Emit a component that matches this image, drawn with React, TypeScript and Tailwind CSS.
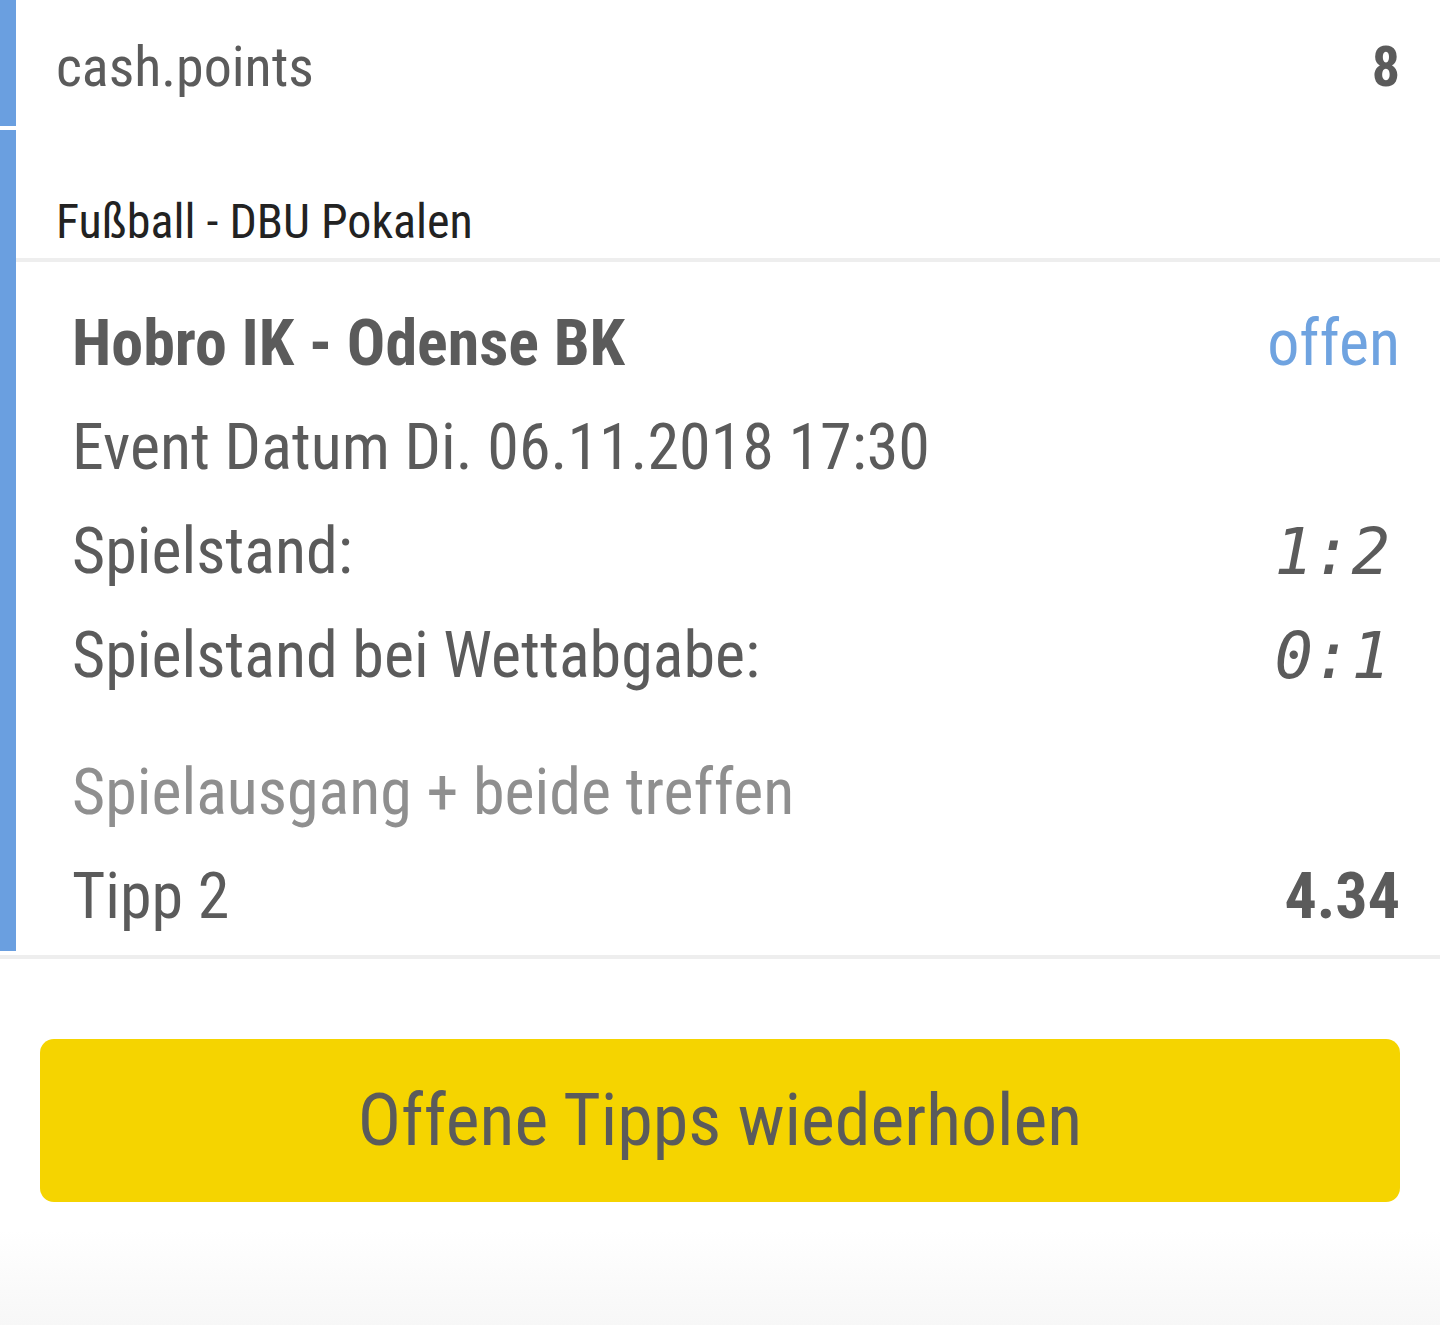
import * as React from "react";

const font = "font-['Roboto_Condensed','Roboto','Noto_Sans',sans-serif]";
const score = "pr-[10px] italic text-[#5b5b5b] font-['DejaVu_Sans_Mono',monospace] text-[54px]";

const Row = ({
  label,
  value,
  labelClass = "text-[#5b5b5b]",
  valueClass = "",
}: {
  label: string;
  value?: React.ReactNode;
  labelClass?: string;
  valueClass?: string;
}) => (
  <div className="flex h-[104px] items-center justify-between">
    <span className={`text-[64px] leading-[104px] ${labelClass}`}>{label}</span>
    {value !== undefined && (
      <span className={`text-[64px] leading-[104px] ${valueClass}`}>{value}</span>
    )}
  </div>
);

export default function App() {
  return (
    <div className={`min-h-[1325px] bg-white ${font}`}>
      {/* last row of the previous card */}
      <div className="flex h-[126px]">
        <div className="w-4 bg-[#6a9fe0]" />
        <div className="flex flex-1 items-center justify-between pl-[40px] pr-[40px] pt-2">
          <span className="text-[56px] leading-none text-[#5b5b5b]">cash.points</span>
          <span className="text-[56px] font-bold leading-none text-[#5b5b5b]">8</span>
        </div>
      </div>

      <div className="mt-1 flex">
        <div className="w-4 bg-[#6a9fe0]" />
        <div className="flex-1">
          <div className="flex h-[128px] items-end pb-3 pl-[40px]">
            <span className="text-[48px] leading-[48px] text-[#222222]">Fußball - DBU Pokalen</span>
          </div>
          <div className="h-1 bg-[#eeeeee]" />

          <div className="pb-[2px] pl-[56px] pr-[40px] pt-[30px]">
            <Row
              label="Hobro IK - Odense BK"
              labelClass="font-bold text-[#5b5b5b]"
              value="offen"
              valueClass="text-[#6fa3e0]"
            />
            <Row label="Event Datum Di. 06.11.2018 17:30" />
            <Row label="Spielstand:" value="1:2" valueClass={score} />
            <Row label="Spielstand bei Wettabgabe:" value="0:1" valueClass={score} />
            <div className="h-[33px]" />
            <Row label="Spielausgang + beide treffen" labelClass="text-[#8f8f8f]" />
            <Row label="Tipp 2" value="4.34" valueClass="font-bold text-[#5b5b5b]" />
          </div>
        </div>
      </div>

      <div className="mt-1 h-1 bg-[#eeeeee]" />

      <div className="px-10 pt-20">
        <button className="flex h-[163px] w-full items-center justify-center rounded-[14px] bg-[#f5d400]">
          <span className="text-[72px] leading-none text-[#5b5b5b]">Offene Tipps wiederholen</span>
        </button>
      </div>

      <div className="mt-[28px] h-[96px] bg-gradient-to-b from-white to-[#f7f7f7]" />
    </div>
  );
}
